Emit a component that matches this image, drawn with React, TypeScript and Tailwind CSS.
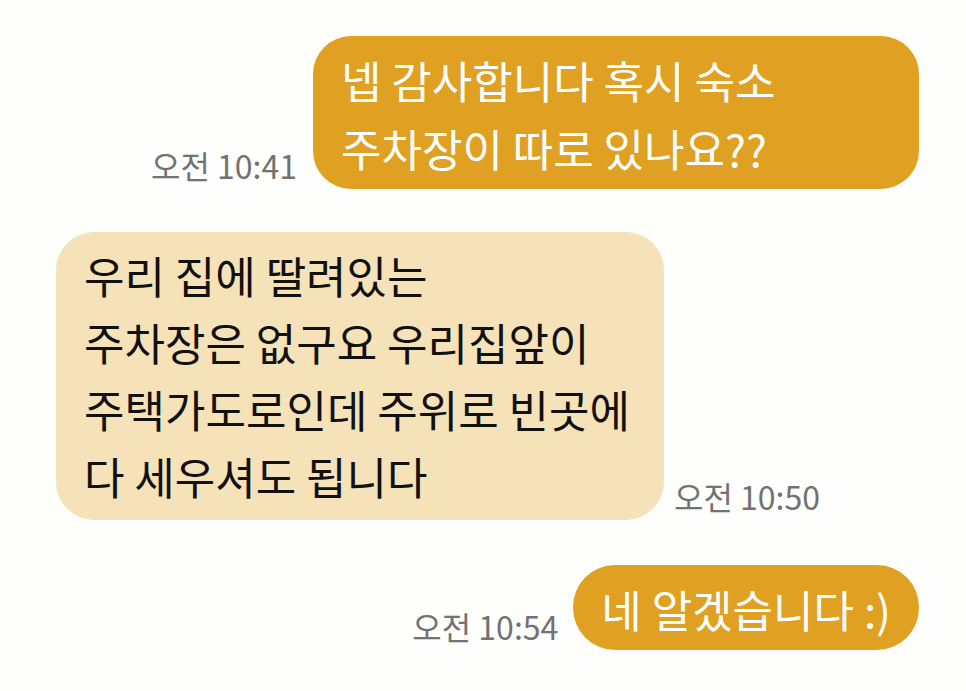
const Stamp = ({ time }: { time: string }) => (
  <span className="mb-[6px] shrink-0 text-[32px] leading-[36px] text-[#727272] whitespace-nowrap">
    오전 {time}
  </span>
);

export default function App() {
  return (
    <div className="min-h-[691px] w-full bg-[#fefefd] font-['Noto_Sans_CJK_KR','Noto_Sans',sans-serif]">
      <div className="flex flex-col pt-[36px]">
        <div className="flex items-end justify-end gap-[16px] pr-[47px]">
          <Stamp time="10:41" />
          <div className="w-[606px] rounded-[38px] bg-[#e0a123] pl-[28px] pr-[20px] pt-[10px] pb-[7px] text-[44px] leading-[68px] text-white">
            넵 감사합니다 혹시 숙소
            <br />
            주차장이 따로 있나요??
          </div>
        </div>

        <div className="mt-[43px] flex items-end gap-[10px] pl-[56px]">
          <div className="w-[608px] rounded-[38px] bg-[#f6e2b8] pl-[28px] pr-[20px] pt-[10px] pb-[10px] text-[44px] leading-[67px] text-[#111111]">
            우리 집에 딸려있는
            <br />
            주차장은 없구요 우리집앞이
            <br />
            주택가도로인데 주위로 빈곳에
            <br />
            다 세우셔도 됩니다
          </div>
          <Stamp time="10:50" />
        </div>

        <div className="mt-[45px] flex items-end justify-end gap-[15px] pr-[47px]">
          <Stamp time="10:54" />
          <div className="rounded-[42px] bg-[#e0a123] px-[28px] pt-[10px] pb-[7px] text-[44px] leading-[68px] text-white whitespace-nowrap">
            네 알겠습니다 :)
          </div>
        </div>
      </div>
    </div>
  );
}
